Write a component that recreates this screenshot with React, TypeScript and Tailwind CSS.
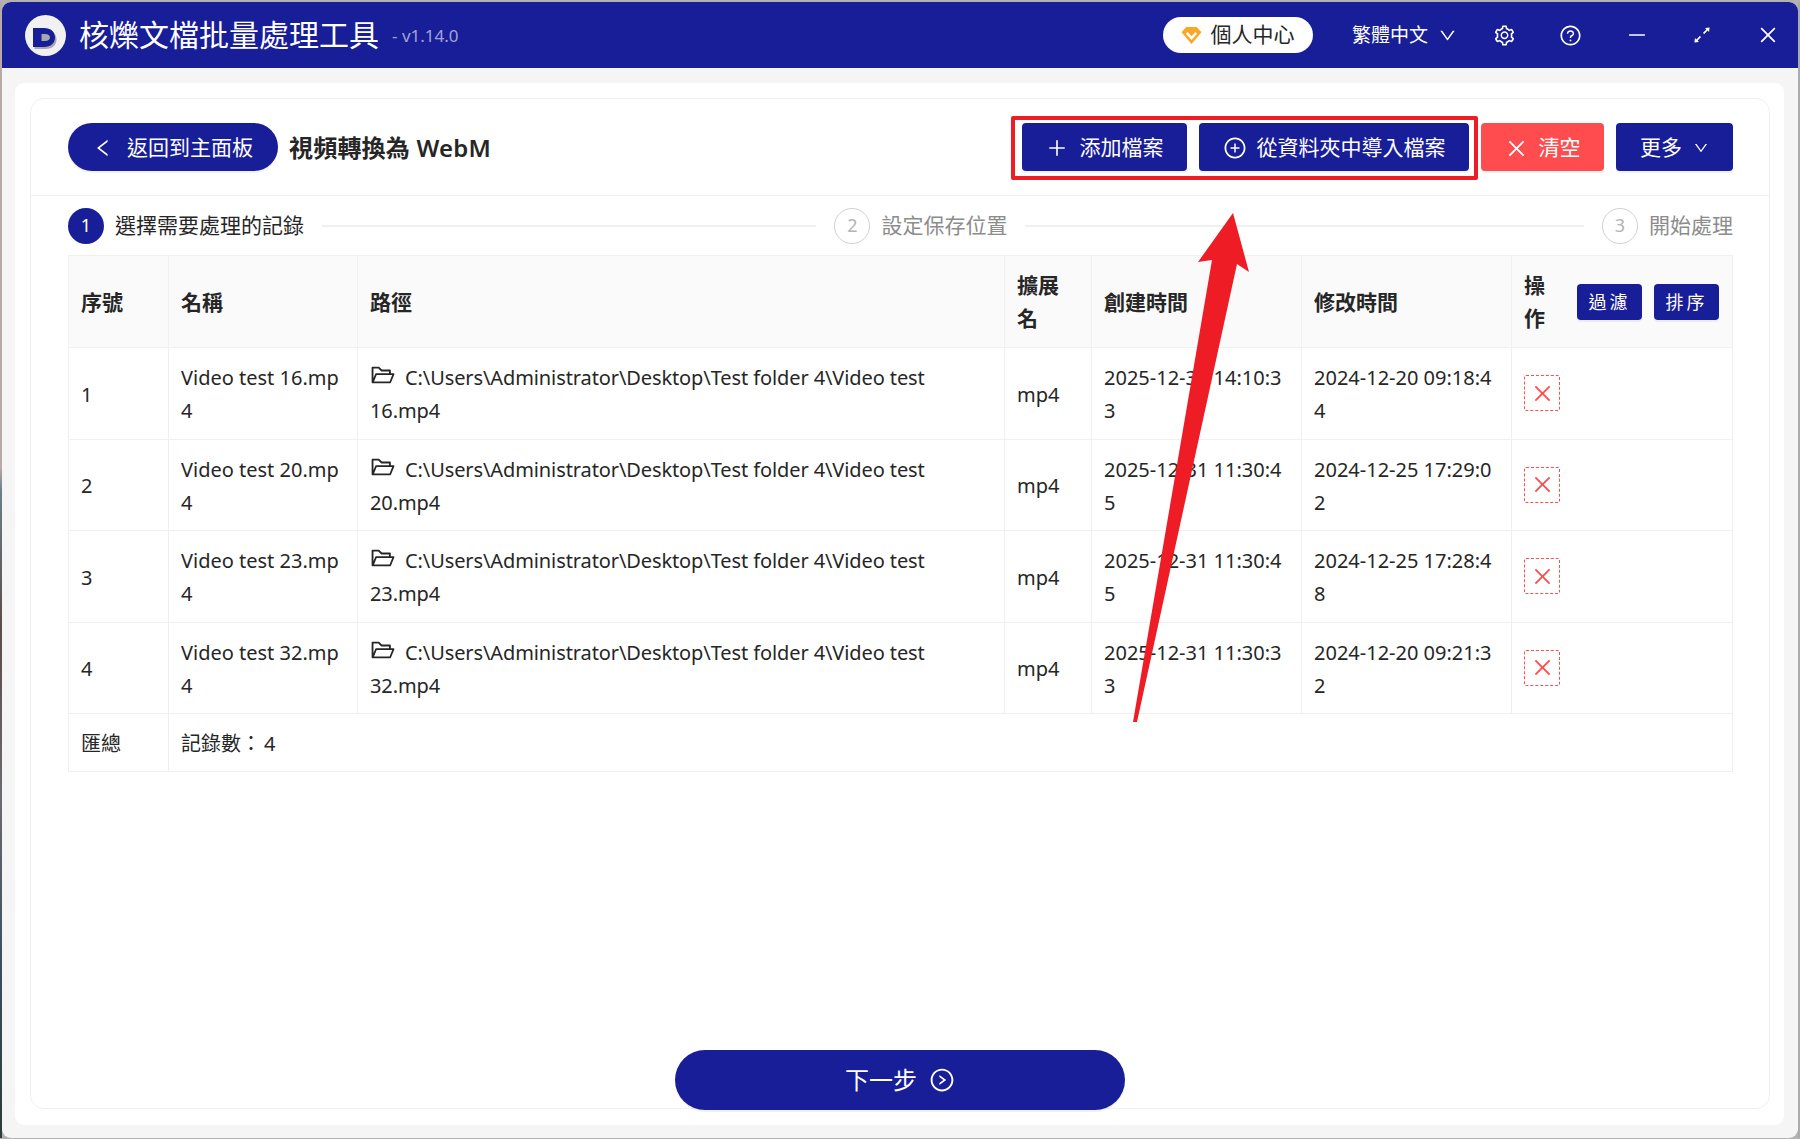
import {
  AiOutlinePlus,
  AiOutlinePlusCircle,
  AiOutlineClose,
  AiOutlineDown,
  AiOutlineLeft,
  AiOutlineSetting,
  AiOutlineQuestionCircle,
  AiOutlineMinus,
  AiOutlineArrowsAlt,
  AiOutlineRightCircle,
  AiOutlineFolderOpen,
} from "react-icons/ai";

const rows = [
  { n: "1", name: "16", c1: "2025-12-31 14:10:3", c2: "3", m1: "2024-12-20 09:18:4", m2: "4" },
  { n: "2", name: "20", c1: "2025-12-31 11:30:4", c2: "5", m1: "2024-12-25 17:29:0", m2: "2" },
  { n: "3", name: "23", c1: "2025-12-31 11:30:4", c2: "5", m1: "2024-12-25 17:28:4", m2: "8" },
  { n: "4", name: "32", c1: "2025-12-31 11:30:3", c2: "3", m1: "2024-12-20 09:21:3", m2: "2" },
];

const btn =
  "h-[48px] rounded-[4px] flex items-center justify-center pt-[2px] text-[21px] text-white shadow-[0_2px_0_rgba(0,0,0,0.05)] whitespace-nowrap";
const th = "border-r border-b border-[#f0f0f0] px-[12px] pt-[1px] text-left text-[21px] font-bold align-middle";
const td = "border-r border-b border-[#f0f0f0] px-[12px] pt-[2px] align-middle whitespace-nowrap";

function Step({ n, label, active }: { n: string; label: string; active?: boolean }) {
  return (
    <div className="flex items-center gap-[11px] shrink-0">
      <span
        className={
          active
            ? "w-[36px] h-[36px] rounded-full bg-[#181d98] text-white flex items-center justify-center text-[18px]"
            : "w-[36px] h-[36px] rounded-full border border-[#d0d0d0] text-[#b4b4b4] flex items-center justify-center text-[18px]"
        }
      >
        {n}
      </span>
      <span className={active ? "text-[21px] text-[#262626]" : "text-[21px] text-[#8c8c8c]"}>{label}</span>
    </div>
  );
}

export default function App() {
  return (
    <div
      className="relative h-[1139px] w-[1800px] overflow-hidden flex bg-[#b4b2b1] pt-[2px] pb-[1px] text-[#262626]"
      style={{ fontFamily: '"Noto Sans", "Noto Sans CJK TC", sans-serif' }}
    >
      <div className="w-[2px] shrink-0 bg-[linear-gradient(to_bottom,#b8aaa6_0%,#b8aaa6_41%,#6d7f88_43%,#5b4d49_55%,#6e6a72_70%,#39505c_85%,#2f3a3a_100%)]" />
      <div className="flex-1 min-w-0 flex flex-col rounded-[9px] overflow-hidden bg-[#f5f5f5]">
        {/* title bar */}
        <header className="h-[66px] shrink-0 bg-[#181d98] flex items-center pl-[23px] pr-[19px] text-white">
          <svg width="41" height="41" viewBox="0 0 41 41" className="shrink-0">
            <circle cx="20.5" cy="20.5" r="20.5" fill="#f1f1f1" />
            <path d="M9.5 15h11c7 0 11 4 11 9.5s-4 9.5-11 9.5h-11z" fill="#a9a9ad" />
            <path
              fillRule="evenodd"
              d="M8 13h11c7 0 11 4 11 9.5S26 32 19 32H8zM16.5 19v7h3.5c3 0 5-1.3 5-3.5S23 19 20 19z"
              fill="#181d98"
            />
          </svg>
          <span className="ml-[13px] text-[30px] leading-none whitespace-nowrap">核爍文檔批量處理工具</span>
          <span className="ml-[13px] mt-[2px] text-[17px] text-white/60 whitespace-nowrap">- v1.14.0</span>
          <div className="ml-auto h-[36px] w-[150px] rounded-full bg-white flex items-center justify-center gap-[8px] text-[21px] text-[#262626]">
            <svg width="21" height="19" viewBox="0 0 20 18">
              <path d="M5 1h10l4.5 5L10 17 .5 6z" fill="#f9a825" />
              <path d="M5.5 6.5 10 11.5l4.5-5" fill="none" stroke="#fff" strokeWidth="2.4" />
            </svg>
            個人中心
          </div>
          <span className="ml-[39px] text-[19px] whitespace-nowrap">繁體中文</span>
          <AiOutlineDown className="ml-[10px] text-[19px]" />
          <AiOutlineSetting className="ml-[36px] text-[23px]" />
          <AiOutlineQuestionCircle className="ml-[43px] text-[23px]" />
          <AiOutlineMinus className="ml-[44px] text-[22px]" />
          <AiOutlineArrowsAlt className="ml-[43px] text-[22px]" />
          <AiOutlineClose className="ml-[44px] text-[22px]" />
        </header>

        {/* content */}
        <main className="flex-1 min-h-0 pt-[15px] pl-[13px] pr-[14px] pb-[13px] flex">
          <div className="flex-1 min-w-0 bg-white rounded-[9px] pt-[15px] pl-[15px] pr-[14px] pb-[16px] flex">
            <div className="flex-1 min-w-0 border border-[#f0f0f0] rounded-[14px] flex flex-col">
              {/* toolbar */}
              <div className="h-[97px] shrink-0 border-b border-[#f0f0f0] pl-[37px] pr-[36px] flex items-center">
                <button className="w-[210px] h-[48px] rounded-full bg-[#181d98] text-white pt-[2px] text-[21px] flex items-center pl-[24px] gap-[13px] shadow-[0_2px_0_rgba(0,0,0,0.05)] whitespace-nowrap">
                  <AiOutlineLeft className="text-[22px]" />
                  返回到主面板
                </button>
                <h1 className="ml-[11px] mt-[2px] text-[24px] tracking-[0.2px] font-semibold text-[#262626] whitespace-nowrap">視頻轉換為 WebM</h1>
                <div className="ml-auto flex items-center">
                  <div className="relative flex gap-[12px] mr-[12px]">
                    <button className={btn + " w-[165px] bg-[#181d98] gap-[12px]"}>
                      <AiOutlinePlus className="text-[22px]" />
                      添加檔案
                    </button>
                    <button className={btn + " w-[270px] bg-[#181d98] gap-[10px]"}>
                      <AiOutlinePlusCircle className="text-[24px]" />
                      從資料夾中導入檔案
                    </button>
                    <div className="absolute -left-[11px] -right-[9px] -top-[7px] -bottom-[9px] border-[4px] border-[#ee1c25] rounded-[2px]" />
                  </div>
                  <button className={btn + " w-[123px] bg-[#ff4d4f] gap-[11px]"}>
                    <AiOutlineClose className="text-[23px]" />
                    清空
                  </button>
                  <button className={btn + " w-[117px] ml-[12px] bg-[#181d98] gap-[11px]"}>
                    更多
                    <AiOutlineDown className="text-[16px]" />
                  </button>
                </div>
              </div>

              {/* steps */}
              <div className="h-[59px] shrink-0 pl-[37px] pr-[36px] flex items-center">
                <Step n="1" label="選擇需要處理的記錄" active />
                <div className="flex-[493] h-[2px] bg-[#f0f0f0] mx-[18px]" />
                <Step n="2" label="設定保存位置" />
                <div className="flex-[557] h-[2px] bg-[#f0f0f0] mx-[18px]" />
                <Step n="3" label="開始處理" />
              </div>

              {/* table */}
              <div className="pl-[37px] pr-[36px] text-[20px] leading-[33px] text-[#262626]">
                <table className="w-full table-fixed border-collapse border-t border-l border-[#f0f0f0]">
                  <colgroup>
                    <col className="w-[100px]" />
                    <col className="w-[189px]" />
                    <col className="w-[647px]" />
                    <col className="w-[87px]" />
                    <col className="w-[210px]" />
                    <col className="w-[210px]" />
                    <col />
                  </colgroup>
                  <thead>
                    <tr className="h-[92px] bg-[#fafafa]">
                      <th className={th}>序號</th>
                      <th className={th}>名稱</th>
                      <th className={th}>路徑</th>
                      <th className={th}>
                        擴展
                        <br />名
                      </th>
                      <th className={th}>創建時間</th>
                      <th className={th}>修改時間</th>
                      <th className={th}>
                        <div className="flex items-center pr-[1px]">
                          <span>
                            操
                            <br />作
                          </span>
                          <div className="ml-auto flex gap-[12px] font-normal">
                            <button className="w-[65px] h-[36px] rounded-[4px] bg-[#181d98] text-white text-[18px] tracking-[3px] shadow-[0_2px_0_rgba(0,0,0,0.05)]">
                              過濾
                            </button>
                            <button className="w-[65px] h-[36px] rounded-[4px] bg-[#181d98] text-white text-[18px] tracking-[3px] shadow-[0_2px_0_rgba(0,0,0,0.05)]">
                              排序
                            </button>
                          </div>
                        </div>
                      </th>
                    </tr>
                  </thead>
                  <tbody>
                    {rows.map((r) => (
                      <tr key={r.n} className="h-[91.5px]">
                        <td className={td}>{r.n}</td>
                        <td className={td}>
                          Video test {r.name}.mp
                          <br />4
                        </td>
                        <td className={td + " tracking-[-0.1px]"}>
                          <AiOutlineFolderOpen className="inline-block text-[26px] mr-[9px] align-[-3px]" />
                          C:\Users\Administrator\Desktop\Test folder 4\Video test
                          <br />
                          {r.name}.mp4
                        </td>
                        <td className={td}>mp4</td>
                        <td className={td}>
                          {r.c1}
                          <br />
                          {r.c2}
                        </td>
                        <td className={td}>
                          {r.m1}
                          <br />
                          {r.m2}
                        </td>
                        <td className={td}>
                          <button className="-mt-[2px] w-[36px] h-[36px] border border-dashed border-[#ff4d4f] rounded-[2px] flex items-center justify-center text-[#ff4d4f]">
                            <AiOutlineClose className="text-[23px]" />
                          </button>
                        </td>
                      </tr>
                    ))}
                    <tr className="h-[58px]">
                      <td className={td}>匯總</td>
                      <td className="border-b border-r border-[#f0f0f0] px-[12px] pt-[2px] whitespace-nowrap" colSpan={6}>
                        記錄數：<span className="ml-[3px]">4</span>
                      </td>
                    </tr>
                  </tbody>
                </table>
              </div>

              {/* next */}
              <div className="mt-auto flex justify-center -mb-[2px]">
                <button className="w-[450px] h-[60px] rounded-full bg-[#181d98] text-white text-[24px] flex items-center justify-center gap-[12px] shadow-[0_2px_0_rgba(0,0,0,0.05)]">
                  下一步
                  <AiOutlineRightCircle className="text-[26px]" />
                </button>
              </div>
            </div>
          </div>
        </main>
      </div>
      <div className="w-[2px] shrink-0 bg-[#ababab]" />

      {/* red annotation arrow */}
      <svg className="absolute left-0 top-0 pointer-events-none" width="1800" height="1139" viewBox="0 0 1800 1139">
        <polygon points="1233,213 1198,262 1212,260 1133,722 1137,722 1237,264 1249,272" fill="#ee1c25" />
      </svg>
    </div>
  );
}
